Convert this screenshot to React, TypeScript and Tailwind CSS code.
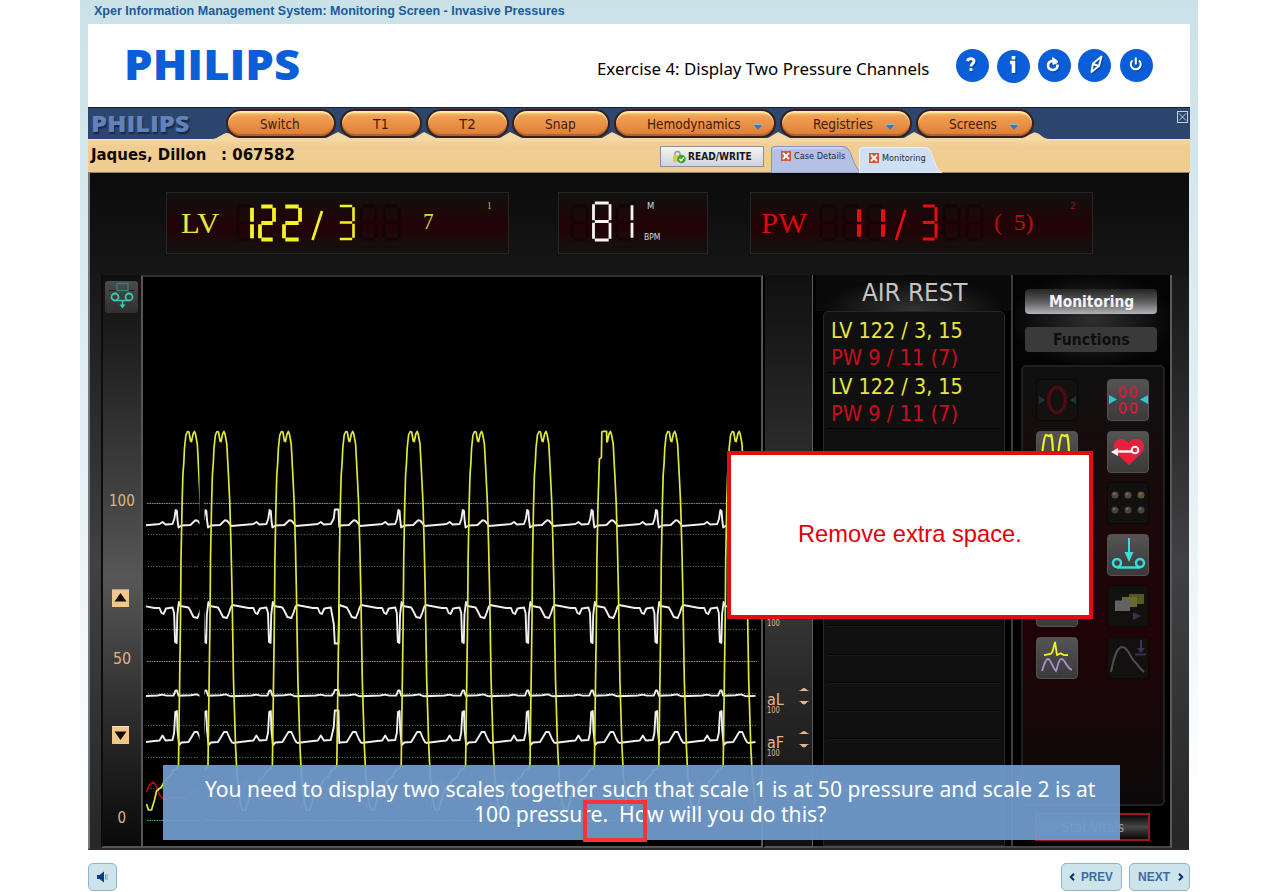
import { useLayoutEffect, useRef, useState } from "react";
import type { ReactNode } from "react";

const TAHOMA = "font-['DejaVu_Sans_Condensed','DejaVu_Sans',sans-serif]";
const SERIF = "font-['Liberation_Serif',serif]";

/** Single line of text squeezed or stretched to a given width; `box` styles the outer box. */
function Fit({ w, box = "", className = "", children }: { w: number; box?: string; className?: string; children: ReactNode }) {
  const ref = useRef<HTMLSpanElement>(null);
  const [k, setK] = useState(1);
  useLayoutEffect(() => {
    if (ref.current && ref.current.offsetWidth) setK(w / ref.current.offsetWidth);
  }, [w]);
  return (
    <span className={`inline-flex shrink-0 ${box}`} style={{ width: w }}>
      <span
        ref={ref}
        className={`inline-block origin-left whitespace-pre ${className}`}
        style={{ transform: `scaleX(${k})` }}
      >
        {children}
      </span>
    </span>
  );
}

/* ---------- seven segment digits ---------- */

const SEGMENTS: Record<string, string> = {
  "1": "bc",
  "2": "abged",
  "3": "abgcd",
  "8": "abcdefg",
};

function segPath(d: string, x: number, y: number, w: number, h: number) {
  const m = y + h / 2;
  const g = 1.3;
  const lines: Record<string, string> = {
    a: `M${x + g} ${y}H${x + w - g}`,
    b: `M${x + w} ${y + g}V${m - g}`,
    c: `M${x + w} ${m + g}V${y + h - g}`,
    d: `M${x + g} ${y + h}H${x + w - g}`,
    e: `M${x} ${m + g}V${y + h - g}`,
    f: `M${x} ${y + g}V${m - g}`,
    g: `M${x + g} ${m}H${x + w - g}`,
  };
  return SEGMENTS[d]
    .split("")
    .map((s) => lines[s])
    .join("");
}

function Ghost({ x, y = 206 }: { x: number; y?: number }) {
  return <path d={segPath("8", x, y, 15, 33)} stroke="#0c0404" strokeWidth="3" fill="none" opacity=".65" />;
}

/* ---------- top bars ---------- */

function RoundButton({ children, className }: { children: ReactNode; className: string }) {
  return (
    <button className={`flex size-[33px] items-center justify-center rounded-full bg-[#0b5ed7] ${className}`}>
      <svg width="33" height="33" viewBox="0 0 33 33" fill="none">
        <g stroke="#063a94" transform="translate(1.2 1.2)" opacity=".7">
          {children}
        </g>
        <g stroke="#fff">{children}</g>
      </svg>
    </button>
  );
}

function NavButton({ label, w, tw, menu, pl, ml }: { label: string; w: number; tw: number; menu?: boolean; pl: number; ml: number }) {
  return (
    <div className="shrink-0" style={{ marginLeft: ml }}>
      <button
        className="relative flex h-[29px] items-center rounded-full border-2 border-[#35201c] bg-linear-to-b from-[#fbd68a] via-[#f0a053] via-20% to-[#dd7d36] shadow-[inset_0_2px_1px_#ffeaa0,inset_0_-2px_1px_#b0602c]"
        style={{ width: w, paddingLeft: pl }}
      >
        <Fit w={tw} className={`${TAHOMA} text-[14px] leading-[22px] text-[#3d1b08]`}>
          {label}
        </Fit>
        {menu && (
          <svg className="ml-[12px] mt-[6px]" width="10" height="6" viewBox="0 0 10 6">
            <path d="M0 0h10L5 6z" fill="#3d78b8" />
            <path d="M0 .5h10" stroke="#9ab8cc" />
          </svg>
        )}
      </button>
    </div>
  );
}

function CloseMark() {
  return (
    <svg width="10" height="10" viewBox="0 0 10 10">
      <rect width="10" height="10" fill="#d8553f" />
      <path d="M2 2l6 6M8 2L2 8" stroke="#fff" strokeWidth="1.8" />
    </svg>
  );
}

/* ---------- wave forms ---------- */

type Pt = [number, number];
const toPath = (pts: Pt[], c: number) => "M" + pts.map(([x, y]) => `${(c + x).toFixed(1)} ${y}`).join("L");

const LV: Pt[] = [
  [-44, 804], [-42, 810], [-39, 810], [-36, 800], [-34, 791], [-29, 787], [-26, 781], [-23, 778], [-21, 777],
  [-17, 770], [-14, 769], [-12, 765], [-11.4, 720], [-10, 620], [-9.5, 560], [-8.4, 503], [-7.6, 475], [-6.7, 463], [-6, 448],
  [-4.6, 435], [-3, 431.5], [-1.5, 432], [0, 441], [1, 441.5], [2.6, 434], [4, 431.5], [5, 434], [6.8, 444],
  [8.4, 474], [9.8, 503], [11, 545], [12, 590], [13.5, 680], [15.5, 745], [17, 775], [20.4, 804],
];
const ECG1: Pt[] = [
  [-53.4, 526], [-36, 524.5], [-31, 524], [-28, 522], [-25, 524.5], [-18, 524], [-16.2, 519], [-14.8, 510], [-13.6, 511],
  [-13, 520], [-12, 527.5], [-9, 525.5], [0, 525], [3, 522], [5, 520.3], [7, 520.6], [10, 524], [11, 526],
];
const ECG2: Pt[] = [
  [-52, 605], [-36, 608], [-31, 608], [-29, 613], [-27, 614], [-24.5, 608.5], [-18, 607.5], [-16.4, 613], [-15.4, 642], [-13.8, 643],
  [-13.2, 615], [-11.6, 602], [-10, 606], [-2, 607.5], [0, 611], [3, 617], [7, 618], [9, 613], [11, 607], [12.4, 605],
];
const ECG3: Pt[] = [
  [-53.4, 696.3], [-33, 695.5], [-28, 694.6], [-24, 695.6], [-17, 695.6], [-15, 690.5], [-13.6, 690.5], [-12, 695.8], [0, 695.3],
  [6, 694.4], [9, 695.6], [11, 696.3],
];
const ECG4: Pt[] = [
  [-52, 743], [-36, 741], [-31, 740.5], [-28, 735.5], [-25, 740.5], [-18, 740], [-16.4, 733], [-15.2, 712], [-13.6, 711],
  [-13, 730], [-11.5, 745], [-9, 742.5], [-2, 742], [1, 737], [4, 732], [7, 732], [10, 739], [12.4, 743],
];
const PW: Pt[] = [
  [-44, 792], [-41, 785], [-37, 782], [-34, 786], [-31, 795], [-27, 799], [-20, 798], [-12, 798], [-4, 797],
  [3, 791], [7, 790], [10, 795], [14, 804], [18, 808], [20.4, 792],
];
const FLAT: [Pt[], number, number][] = [
  [ECG1, 509.5, 527],
  [ECG2, 643.5, 605],
  [ECG3, 690, 695.5],
  [ECG4, 710.5, 743],
];

const CENTERS = [220, 284.4, 348.8, 413.2, 477.6, 542, 606.4, 670.8, 735.2, 799.6];

function beat(pts: Pt[], c: number, i: number) {
  const odd = FLAT.find((f) => f[0] === pts);
  if (i === 2 && odd) {
    const before = pts.filter((p) => p[0] <= -17);
    const after = pts.filter((p) => p[0] >= -9.5);
    return toPath([...before, [-15, (odd[1] + odd[2]) / 2], [-14, odd[1]], [-10.3, odd[1]], [-9.6, odd[2]], ...after], c);
  }
  if (i === 6 && pts === LV) {
    const before = pts.filter((p) => p[0] <= -8);
    const after = pts.filter((p) => p[0] >= 1);
    return toPath([...before, [-7, 459], [-5, 457.5], [-4.6, 432], [-3, 431.3], [0.2, 431.3], [0.4, 442], ...after], c);
  }
  return toPath(pts, c);
}

function Trace({ pts, color, width }: { pts: Pt[]; color: string; width: number }) {
  return (
    <g fill="none" stroke={color} strokeWidth={width} strokeLinejoin="round">
      <path d={toPath(pts, 190.5)} clipPath="url(#early)" />
      <path d={CENTERS.map((c, i) => beat(pts, c, i)).join("")} clipPath="url(#late)" />
    </g>
  );
}

function WaveForms() {
  return (
    <svg className="block" width="618" height="573" viewBox="143 275 618 573">
      <defs>
        <clipPath id="early"><rect x="146" y="275" width="53.5" height="573" /></clipPath>
        <clipPath id="late"><rect x="204.5" y="275" width="551" height="573" /></clipPath>
      </defs>
      {[534.5, 566.5, 598.5, 629.5, 693.5, 725.5, 757.5, 788.5].map((y) => (
        <path key={y} d={`M148 ${y}H199M204 ${y}H757`} stroke="#5f8a52" strokeWidth="1" strokeDasharray="1 1.7" />
      ))}
      {[503.5, 661.5, 820.5].map((y) => (
        <path key={y} d={`M147 ${y}H200M204 ${y}H757`} stroke="#4ca896" strokeWidth="1.200" strokeDasharray="1.6 .8" />
      ))}
      <Trace pts={PW} color="#c00010" width={1.6} />
      <Trace pts={ECG1} color="#f0f0f0" width={1.9} />
      <Trace pts={ECG2} color="#f0f0f0" width={1.9} />
      <Trace pts={ECG3} color="#f0f0f0" width={1.9} />
      <Trace pts={ECG4} color="#f0f0f0" width={1.9} />
      <Trace pts={LV} color="#e0e83c" width={1.7} />
    </svg>
  );
}

/* ---------- side panels ---------- */

function Arrow({ up }: { up?: boolean }) {
  return (
    <svg width="17" height="18" viewBox="0 0 17 18">
      <rect width="17" height="18" fill="#f2c88a" />
      <path d="M0 .5h17" stroke={up ? "#7fb894" : "#f8e0b0"} />
      <path d={up ? "M8.500 4L14.500 12.500H2.500z" : "M2.500 5.500H14.500L8.500 14z"} fill="#140a04" />
    </svg>
  );
}

function LeadLabel({ name }: { name: string }) {
  return (
    <div className="flex h-[43px] items-start justify-between pl-[2px] pr-[2px] text-[#e8b48c]">
      <div className="flex flex-col">
        <Fit w={17} className={`${TAHOMA} text-[16px] leading-[15px]`}>{name}</Fit>
        <Fit w={13} className={`${TAHOMA} text-[8px] leading-[7px]`}>100</Fit>
      </div>
      <svg className="-mt-[5px]" width="12" height="20" viewBox="0 0 12 20" fill="#e8b48c">
        <path d="M0 4C3 4 4 1 6 1s3 3 6 3z" />
        <path d="M0 14h12c-3 0-4 3.500-6 3.500S3 14 0 14z" />
      </svg>
    </div>
  );
}

function Tile({ dim, children }: { dim?: boolean; children?: ReactNode }) {
  return (
    <div
      className={
        dim
          ? "size-[42px] rounded-[4px] border border-[#0c0808] bg-[#131010]"
          : "size-[42px] rounded-[4px] border border-[#525252] bg-linear-to-b from-[#545454] to-[#3a3a3a]"
      }
    >
      <svg width="40" height="40" viewBox="1 1 40 40" fill="none">
        {children}
      </svg>
    </div>
  );
}

function ToolGrid() {
  return (
    <div className="grid grid-cols-[42px_42px] gap-x-[29px] gap-y-[9.600px]">
      <Tile dim>
        <ellipse cx="21" cy="21" rx="8.500" ry="12.500" stroke="#4c0c10" strokeWidth="3.500" />
        <path d="M3 17l6 4-6 4zM40 17l-6 4 6 4z" fill="#17383c" />
      </Tile>
      <Tile>
        <g stroke="#c8243c" strokeWidth="2">
          <ellipse cx="16" cy="13" rx="3" ry="5" />
          <ellipse cx="27" cy="13" rx="3" ry="5" />
          <ellipse cx="16" cy="29" rx="3" ry="5" />
          <ellipse cx="27" cy="29" rx="3" ry="5" />
        </g>
        <path d="M2 16l8 4.500-8 4.500zM41 16l-8 4.500 8 4.500z" fill="#36c4dc" />
      </Tile>
      <Tile>
        <path d="M6 25C7 15 8 5 10 4l3 1 2-1c2 5 2 13 2 26M22 25c1-10 2-20 4-21l3 1 2-1c2 5 2 13 2 26" stroke="#f0f024" strokeWidth="2.200" />
      </Tile>
      <Tile>
        <path d="M22 34L9 22C4 15 8 8 14 8c4 0 6 2 7.500 4 1-2 4-4 7-4 8 0 11 7 6 14z" fill="#e8203c" />
        <path d="M9 20.500h16" stroke="#fff" strokeWidth="2.400" />
        <circle cx="28" cy="19" r="3.300" stroke="#fff" strokeWidth="2" />
        <path d="M4 21l7-4v8z" fill="#fff" />
      </Tile>
      <Tile />
      <Tile dim>
        {[8, 21, 34].map((x, i) => (
          <g key={x}>
            <circle cx={x} cy="13" r="3.500" fill={i === 2 ? "#5c5030" : "#514842"} />
            <circle cx={x} cy="28" r="3.500" fill="#46423f" />
            <circle cx={x - 0.8} cy="12" r="1.300" fill="#7a6a60" />
            <circle cx={x - 0.8} cy="27" r="1.300" fill="#6a6a6a" />
          </g>
        ))}
      </Tile>
      <Tile />
      <Tile>
        <g stroke="#38dcd8" strokeWidth="2.500">
          <circle cx="10" cy="29" r="4" />
          <circle cx="33" cy="29" r="4" />
          <path d="M10 33.500H33" />
          <path d="M22 4v16" strokeWidth="2" />
        </g>
        <path d="M17.500 18h9L22 28z" fill="#38dcd8" />
      </Tile>
      <Tile />
      <Tile dim>
        <rect x="22" y="9" width="15" height="10" fill="#57571f" />
        <rect x="15" y="12" width="15" height="10" fill="#6a6a30" />
        <rect x="8" y="15.500" width="15" height="10.500" fill="#626262" />
        <path d="M26 27l8 4-8 4z" fill="#3a3450" />
      </Tile>
      <Tile>
        <path d="M8 18c3 0 4-1 6-1 2 0 2-2 3-4l2-8 2 13c2 0 3-3 5-1s3 1 6 1" stroke="#f0f030" strokeWidth="1.800" />
        <path d="M6 34c2-5 3-12 6-12s4 8 8 12c2-4 2-11 5-12 4-1 5 9 11 11" stroke="#ab92cc" strokeWidth="1.800" />
      </Tile>
      <Tile dim>
        <path d="M4 35C7 20 10 10 15 10c6 0 8 10 12 14 3 2 4 6 10 11" stroke="#504c52" strokeWidth="2" />
        <path d="M34 3v12M28 17.500h11" stroke="#3c3058" strokeWidth="2" />
        <path d="M30 11h8l-4 5z" fill="#3c3058" />
      </Tile>
    </div>
  );
}

/* ---------- readouts ---------- */

const BOX = "flex h-[62px] shrink-0 items-start border border-[#262626] bg-linear-to-b from-[#101010] via-[#230205] via-55% to-[#121010]";

function Readouts() {
  return (
    <div className="flex h-[102px] shrink-0 pl-[76px] pt-[19px]">
      <div className={`${BOX} w-[343px]`}>
        <Fit w={38} box="ml-[14px] mt-[13px]" className={`${SERIF} text-[30px] leading-[34px] text-[#e8e83c]`}>LV</Fit>
        <svg className="ml-[7px] mt-[3px]" width="180" height="54" viewBox="226 196 180 54" fill="none">
          <Ghost x={238} />
          <Ghost x={361} />
          <Ghost x={384} />
          <g stroke="#f4f424" strokeWidth="3.800">
            <path d={segPath("1", 236, 206.5, 16, 33)} />
            <path d={segPath("2", 260, 206.5, 14, 33)} />
            <path d={segPath("2", 284, 206.5, 16, 33)} />
          </g>
          <path d={segPath("3", 338.5, 206, 15, 33)} stroke="#f4f424" strokeWidth="2.600" />
          <path d="M322 211L312.500 240" stroke="#f4f424" strokeWidth="2.600" />
        </svg>
        <Fit w={11} box="ml-[17px] mt-[15px]" className={`${SERIF} text-[23px] leading-[28px] text-[#d8d83a]`}>7</Fit>
        <Fit w={5} box="ml-[53px] mt-[6px]" className={`${SERIF} text-[11px] leading-[12px] text-[#c0c030]`}>1</Fit>
      </div>
      <div className={`${BOX} ml-[49px] w-[150px]`}>
        <svg className="ml-[5px] mt-[3px]" width="78" height="54" viewBox="564 196 78 54" fill="none">
          <Ghost x={572} />
          <Ghost x={617} />
          <g stroke="#f6f6f6" strokeWidth="2.800">
            <path d={segPath("8", 593.5, 203, 16.5, 37)} />
            <path d={segPath("1", 616, 204, 16, 35)} />
          </g>
        </svg>
        <div className={`${TAHOMA} flex flex-col pt-[9px] text-[#d8d8d8]`}>
          <Fit w={7} box="ml-[5px]" className="text-[8px] leading-[10px]">M</Fit>
          <Fit w={17} box="ml-[2px] mt-[21px]" className="text-[8px] leading-[10px]">BPM</Fit>
        </div>
      </div>
      <div className={`${BOX} ml-[42px] w-[343px]`}>
        <Fit w={46} box="ml-[10px] mt-[13px]" className={`${SERIF} text-[30px] leading-[34px] text-[#d80a10]`}>PW</Fit>
        <svg className="ml-[9px] mt-[3px]" width="174" height="54" viewBox="817 196 174 54" fill="none">
          <Ghost x={822} />
          <Ghost x={845} />
          <Ghost x={869} />
          <Ghost x={945} />
          <Ghost x={968} />
          <g stroke="#e80c10" strokeWidth="4">
            <path d={segPath("1", 844, 208, 16, 30)} />
            <path d={segPath("1", 868, 208, 16, 30)} />
          </g>
          <path d={segPath("3", 922.5, 206, 14.5, 33)} stroke="#e80c10" strokeWidth="3" />
          <path d="M906.500 210L897 240" stroke="#e80c10" strokeWidth="2.600" />
        </svg>
        <Fit w={39} box="ml-[4px] mt-[16px]" className={`${SERIF} text-[23px] leading-[28px] text-[#c00c10]`}>{"(  5)"}</Fit>
        <Fit w={6} box="ml-[37px] mt-[6px]" className={`${SERIF} text-[11px] leading-[12px] text-[#b01010]`}>2</Fit>
      </div>
    </div>
  );
}

function VitalsRow({ text, w, color }: { text: string; w: number; color: string }) {
  return (
    <div className="flex h-[27px] items-center">
      <Fit w={w} className={`${TAHOMA} text-[22px] leading-[27px] ${color}`}>{text}</Fit>
    </div>
  );
}

export default function App() {
  return (
    <div className="flex h-[892px] w-[1280px] flex-col overflow-hidden bg-white pl-[80px]">
      <div className="flex h-full w-[1118px] flex-col bg-linear-to-b from-[#cae2e7] via-[#e6f1f5] via-55% to-white to-90% px-[8px]">
        <div className="flex h-[24px] shrink-0 items-start pl-[6px] pt-[4px]">
          <Fit w={471} className="font-['Liberation_Sans',sans-serif] text-[12px] font-bold leading-[15px] text-[#1c5a98]">
            Xper Information Management System: Monitoring Screen - Invasive Pressures
          </Fit>
        </div>

        <header className="flex h-[83px] w-[1102px] shrink-0 items-start bg-white">
          <Fit w={176} box="ml-[36px] mt-[15px]" className="font-['Open_Sans',sans-serif] text-[43px] font-extrabold leading-[50px] text-[#0b5ed7]">
            PHILIPS
          </Fit>
          <Fit w={332} box="ml-[297px] mt-[34px]" className="font-['Noto_Sans',sans-serif] text-[17px] leading-[22px] text-black">
            Exercise 4: Display Two Pressure Channels
          </Fit>
          <div className="ml-[27px] mt-[25px] flex">
            <RoundButton className="">
              <path d="M11.500 12.200C12 9 18.200 9 18 12.300C17.800 14.800 15 14.500 15 17.500M15 19.300V22" strokeWidth="2.900" />
            </RoundButton>
            <RoundButton className="ml-[8px] mt-px">
              <path d="M13 12.500h3.500V23M16.500 6v3.500" strokeWidth="3.600" />
            </RoundButton>
            <RoundButton className="ml-[8px]">
              <path d="M15 11.800C8 12.500 9 21 14.500 21C18.500 21 20 18 19.300 15.500" strokeWidth="2.700" />
              <path d="M14.500 8.500l5.500 4-5 3z" strokeWidth="1" fill="#fff" />
            </RoundButton>
            <RoundButton className="ml-[7px]">
              <path d="M23.500 7.500l-2.500 9.500-7.500 6 1.500-8.500zM15.200 15l5.300 2" strokeWidth="1.900" strokeLinejoin="round" />
            </RoundButton>
            <RoundButton className="ml-[9px]">
              <path d="M12.500 11.500a5 5 0 1 0 6.500 0M15.800 8.500v7" strokeWidth="2" />
            </RoundButton>
          </div>
        </header>

        <div className="relative flex h-[743px] w-[1102px] shrink-0 flex-col">
          {/* navigation */}
          <nav className="relative flex h-[33px] shrink-0 items-start border-t border-[#14203c] bg-[#2c466e]">
            <svg className="absolute left-0 top-0" width="1102" height="32" viewBox="88 108 1102 32">
              <path
                d="M88 140V139H212C219 139 221 133 228 133L240 138H326L338 132L350 138H414L424 132L436 138H500L510 132L522 138H602L612 132L624 138H768L778 132L790 138H904L914 132L926 138H1022L1034 132.500C1041 132.500 1041 139 1050 139H1190V140z"
                fill="#f6d8a4"
              />
              <path d="M88 139.500H212M1048 139.500H1190" stroke="#f8e2b8" />
            </svg>
            <div className="relative flex items-start pt-px">
              <Fit
                w={98}
                box="ml-[3px]"
                className="font-['Open_Sans',sans-serif] text-[23px] font-extrabold leading-[28px] text-[#6482ba] [text-shadow:1px_2px_1px_#14284e]"
              >
                PHILIPS
              </Fit>
              <NavButton label="Switch" ml={37} w={110} tw={40} pl={32} />
              <NavButton label="T1" ml={4} w={82} tw={16} pl={31} />
              <NavButton label="T2" ml={4} w={83} tw={17} pl={31} />
              <NavButton label="Snap" ml={3} w={98} tw={31} pl={31} />
              <NavButton label="Hemodynamics" ml={4} w={162} tw={94} pl={31} menu />
              <NavButton label="Registries" ml={4} w={132} tw={60} pl={31} menu />
              <NavButton label="Screens" ml={4} w={118} tw={48} pl={31} menu />
            </div>
            <svg className="relative ml-[143px] mt-[3px]" width="11" height="12" viewBox="0 0 11 12" fill="none" stroke="#c8d0dc">
              <rect x=".5" y=".5" width="10" height="11" />
              <path d="M2 2.500l7 7M9 2.500l-7 7" />
            </svg>
          </nav>

          {/* patient bar */}
          <div className="flex h-[33px] shrink-0 items-start border-b border-[#8c8468] bg-linear-to-b from-[#f4d6a0] via-[#f0cd92] via-20% to-[#f0cc90]">
            <Fit w={115} box="ml-[3px] mt-[5px]" className={`${TAHOMA} text-[16px] font-bold leading-[20px] text-[#0c0804]`}>Jaques, Dillon</Fit>
            <Fit w={74} box="ml-[15px] mt-[5px]" className={`${TAHOMA} text-[16px] font-bold leading-[20px] text-[#0c0804]`}>: 067582</Fit>
            <button className="ml-[365px] mt-[6px] flex h-[21px] w-[104px] items-center border border-[#8c9098] bg-linear-to-b from-[#f4f4f8] to-[#cfd3dc] pl-[11px]">
              <svg width="14" height="14" viewBox="0 0 14 14" fill="none">
                <path d="M3 7V4c0-3.500 5-3.500 5 0v2" stroke="#989898" strokeWidth="1.500" />
                <rect x="1" y="5.500" width="8" height="6.500" rx="1" fill="#d8cc40" />
                <circle cx="9.500" cy="9" r="4.300" fill="#3aa838" />
                <path d="M7.500 9l1.500 1.700L12 7.500" stroke="#fff" strokeWidth="1.400" />
              </svg>
              <Fit w={64} box="ml-[2px]" className={`${TAHOMA} text-[11px] font-bold leading-[14px] text-[#18181c]`}>READ/WRITE</Fit>
            </button>
            <div className="relative ml-[7px] mt-[6px] flex h-[27px] w-[88px] items-start pl-[10px] pt-[5px]">
              <svg className="absolute left-0 top-0" width="92" height="27" viewBox="0 0 92 27">
                <path d="M.5 27V3Q.500 .5 4 .5H72C81 .5 80 17 90 27z" fill="#b4c0e4" stroke="#8894c0" />
                <path d="M2 4Q2 2 5 2H72" stroke="#e0e6f8" fill="none" />
              </svg>
              <span className="relative flex items-center gap-[3px]">
                <CloseMark />
                <Fit w={51} className={`${TAHOMA} text-[9.500px] leading-[10px] text-[#202840]`}>Case Details</Fit>
              </span>
            </div>
            <div className="relative mt-[7px] flex h-[26px] w-[88px] items-start pl-[10px] pt-[6px]">
              <svg className="absolute left-0 top-0" width="88" height="26" viewBox="0 0 88 26">
                <path d="M.5 26V3Q.500 .5 4 .5H66C75 .5 73 19 83 26z" fill="#d0e0f4" stroke="#e8f0fc" />
              </svg>
              <span className="relative flex items-center gap-[3px]">
                <CloseMark />
                <Fit w={44} className={`${TAHOMA} text-[9.500px] leading-[10px] text-[#202840]`}>Monitoring</Fit>
              </span>
            </div>
          </div>

          {/* monitoring screen */}
          <main className="flex h-[677px] w-[1101px] flex-col border-b-2 border-l-2 border-b-[#2c2c2c] border-l-[#74787c] bg-linear-to-b from-[#0b0b0b] via-[#161616] via-15% to-[#1b1b1b]">
            <Readouts />
            <div className="flex h-[573px] bg-linear-to-b from-[#181818] via-[#404144] via-50% to-[#262626] pl-[11px]">
              {/* pressure scale */}
              <div className="flex w-[40px] flex-col items-center border-b-2 border-l-2 border-b-[#555] border-l-[#0c0c0c] bg-linear-to-b from-[#101010] via-[#575757] via-53% to-[#0a0a0a] pt-[6px]">
                <div className="mr-[2px] flex h-[32px] w-[33px] rounded-[3px] bg-linear-to-b from-[#4c4c4c] to-[#303030]">
                  <svg width="33" height="32" viewBox="0 0 33 32" fill="none" stroke="#3cc8b4" strokeWidth="1.800">
                    <rect x="12" y="2.500" width="11" height="7" stroke="#2a8880" strokeWidth="1.200" />
                    <circle cx="10" cy="16" r="3.500" />
                    <circle cx="24" cy="16" r="3.500" />
                    <path d="M11 19.500H23M17.500 19.500V26" strokeWidth="1.500" />
                    <path d="M14.500 23.500h6l-3 4z" fill="#3cc8b4" stroke="none" />
                    <path d="M4 9.500h7M24 9.500h5" stroke="#1c1c1c" strokeWidth="1" />
                  </svg>
                </div>
                <Fit w={26} box="mt-[180px]" className={`${TAHOMA} text-[15px] leading-[16px] text-[#e4b08a]`}>100</Fit>
                <div className="mr-[4px] mt-[80px] h-[18px]"><Arrow up /></div>
                <Fit w={18} box="mt-[44px]" className={`${TAHOMA} text-[15px] leading-[16px] text-[#e4b08a]`}>50</Fit>
                <div className="mr-[4px] mt-[59px] h-[18px]"><Arrow /></div>
                <Fit w={9} box="mt-[66px]" className={`${TAHOMA} text-[15px] leading-[16px] text-[#e4b08a]`}>0</Fit>
              </div>
              {/* traces */}
              <div className="w-[622px] overflow-hidden border-2 border-b-2 border-[#555] border-t-[#303030] bg-black">
                <div className="-mt-[2px]"><WaveForms /></div>
              </div>
              {/* lead scale */}
              <div className="flex w-[50px] flex-col border-b-2 border-l-2 border-r border-b-[#555] border-l-black border-r-[#5a5a5a] bg-linear-to-b from-[#101010] via-[#3e3e40] via-50% to-[#101010] pt-[344px]">
                <Fit w={13} box="ml-[2px]" className={`${TAHOMA} text-[8px] leading-[9px] text-[#e8b48c]`}>100</Fit>
                <div className="mt-[64px]">
                  <LeadLabel name="aL" />
                  <LeadLabel name="aF" />
                </div>
              </div>
              {/* vitals log */}
              <div className="flex w-[200px] flex-col items-center border-b-2 border-r-2 border-b-[#484848] border-r-[#3c3c3c] bg-black pl-[3px]">
                <div className="flex h-[36px] w-full items-start justify-center bg-[radial-gradient(ellipse_at_50%_100%,#343434,#0a0a0a_65%)] pl-[2px] pt-[3px]">
                  <Fit w={106} className={`${TAHOMA} text-[24px] leading-[30px] text-[#c4c4c4]`}>AIR REST</Fit>
                </div>
                <div className="w-[182px] grow rounded-t-[5px] border border-[#262626] bg-[#101010] px-[4px] pt-[5px]">
                  {[0, 1].map((n) => (
                    <div key={n} className="h-[56px] border-b border-[#040404] pl-[3px]">
                      <VitalsRow text="LV 122 / 3, 15" w={132} color="text-[#e6e63c]" />
                      <VitalsRow text="PW 9 / 11 (7)" w={127} color="text-[#cc0c1c]" />
                    </div>
                  ))}
                  {Array.from({ length: 14 }, (_, n) => (
                    <div key={n} className="h-[28.200px] border-b border-[#050505] shadow-[0_1px_0_#1a1a1a]" />
                  ))}
                </div>
              </div>
              {/* functions */}
              <div className="flex w-[159px] flex-col border-b-2 border-r-2 border-b-[#484848] border-r-[#5a5a5a] bg-black pl-[8px]">
                <div className="-ml-[6px] flex h-[90px] shrink-0 flex-col bg-[radial-gradient(ellipse_at_50%_50%,#2e2e2e,#040404_75%)] pl-[10px] pt-[14px]">
                  <button className="flex h-[25px] w-[132px] items-center justify-center rounded-[4px] bg-linear-to-b from-[#242424] via-[#5c5c60] to-[#b4b4b8]">
                    <Fit w={85} className={`${TAHOMA} text-[15px] font-bold leading-[20px] text-[#f4f4f4]`}>Monitoring</Fit>
                  </button>
                  <button className="mt-[13px] flex h-[25px] w-[132px] items-center justify-center rounded-[4px] bg-[#3a3a3a]">
                    <Fit w={77} className={`${TAHOMA} text-[15px] font-bold leading-[20px] text-[#0e0e0e]`}>Functions</Fit>
                  </button>
                </div>
                <div className="h-[441px] w-[144px] rounded-[5px] border-2 border-[#202020] bg-linear-to-b from-[#101010] via-[#200306] via-60% to-[#0c090a] pl-[13px] pt-[12px]">
                  <ToolGrid />
                </div>
                <button className="ml-[14px] mt-[7px] flex h-[28px] w-[115px] items-center justify-center border-2 border-[#a01424] bg-linear-to-b from-[#0a0a0a] via-[#484848] to-[#0a0a0a]">
                  <Fit w={62} className={`${TAHOMA} text-[14px] leading-[20px] text-[#9c9c9c]`}>Stat Vitals</Fit>
                </button>
              </div>
            </div>
          </main>

          {/* instruction overlay */}
          <div className="absolute left-[75px] top-[658px] flex h-[75px] w-[957px] flex-col items-center bg-[#719bcc]/94 pl-[16px] pt-[12px] text-white">
            <Fit w={890} className="font-['Noto_Sans',sans-serif] text-[21px] leading-[25px]">
              You need to display two scales together such that scale 1 is at 50 pressure and scale 2 is at
            </Fit>
            <Fit w={352} className="font-['Noto_Sans',sans-serif] text-[21px] leading-[25px]">
              {"100 pressure.  How will you do this?"}
            </Fit>
          </div>
          <div className="absolute left-[495px] top-[693px] h-[42px] w-[64px] border-4 border-[#f63338]" />

          {/* review note */}
          <div className="absolute left-[639px] top-[344px] flex h-[168px] w-[366px] items-center justify-center border-4 border-[#e40c0c] bg-white pb-[2px]">
            <Fit w={224} className="font-['Liberation_Sans',sans-serif] text-[24px] leading-[28px] text-[#e00008]">Remove extra space.</Fit>
          </div>
        </div>

        <footer className="flex h-[42px] w-[1102px] shrink-0 items-start pt-[13px] font-['Liberation_Sans',sans-serif] text-[12px] font-bold text-[#3a6ca4]">
          <button className="flex h-[28px] w-[29px] items-center justify-center rounded-[5px] border border-[#8cb4d4] bg-[#cde4ea]">
            <svg width="13" height="12" viewBox="0 0 13 12">
              <path d="M1 4h2.500L8 .5v11L3.500 8H1z" fill="#0a3c88" />
              <path d="M9.500 3.500v5M11 3v6" stroke="#7ca4c4" />
            </svg>
          </button>
          <button className="ml-auto flex h-[28px] w-[61px] items-center rounded-[5px] border border-[#8cb4d4] bg-[#cde4ea] pl-[7px]">
            <svg width="6" height="8" viewBox="0 0 6 8" fill="none" stroke="#0a3070" strokeWidth="2"><path d="M5 .8L1.800 4 5 7.200" /></svg>
            <Fit w={32} box="ml-[6px]" className="leading-[14px]">PREV</Fit>
          </button>
          <button className="ml-[7px] flex h-[28px] w-[61px] items-center rounded-[5px] border border-[#8cb4d4] bg-[#cde4ea] pl-[8px]">
            <Fit w={32} className="leading-[14px]">NEXT</Fit>
            <svg className="ml-[8px]" width="6" height="8" viewBox="0 0 6 8" fill="none" stroke="#0a3070" strokeWidth="2"><path d="M1 .8L4.200 4 1 7.200" /></svg>
          </button>
        </footer>
      </div>
    </div>
  );
}
